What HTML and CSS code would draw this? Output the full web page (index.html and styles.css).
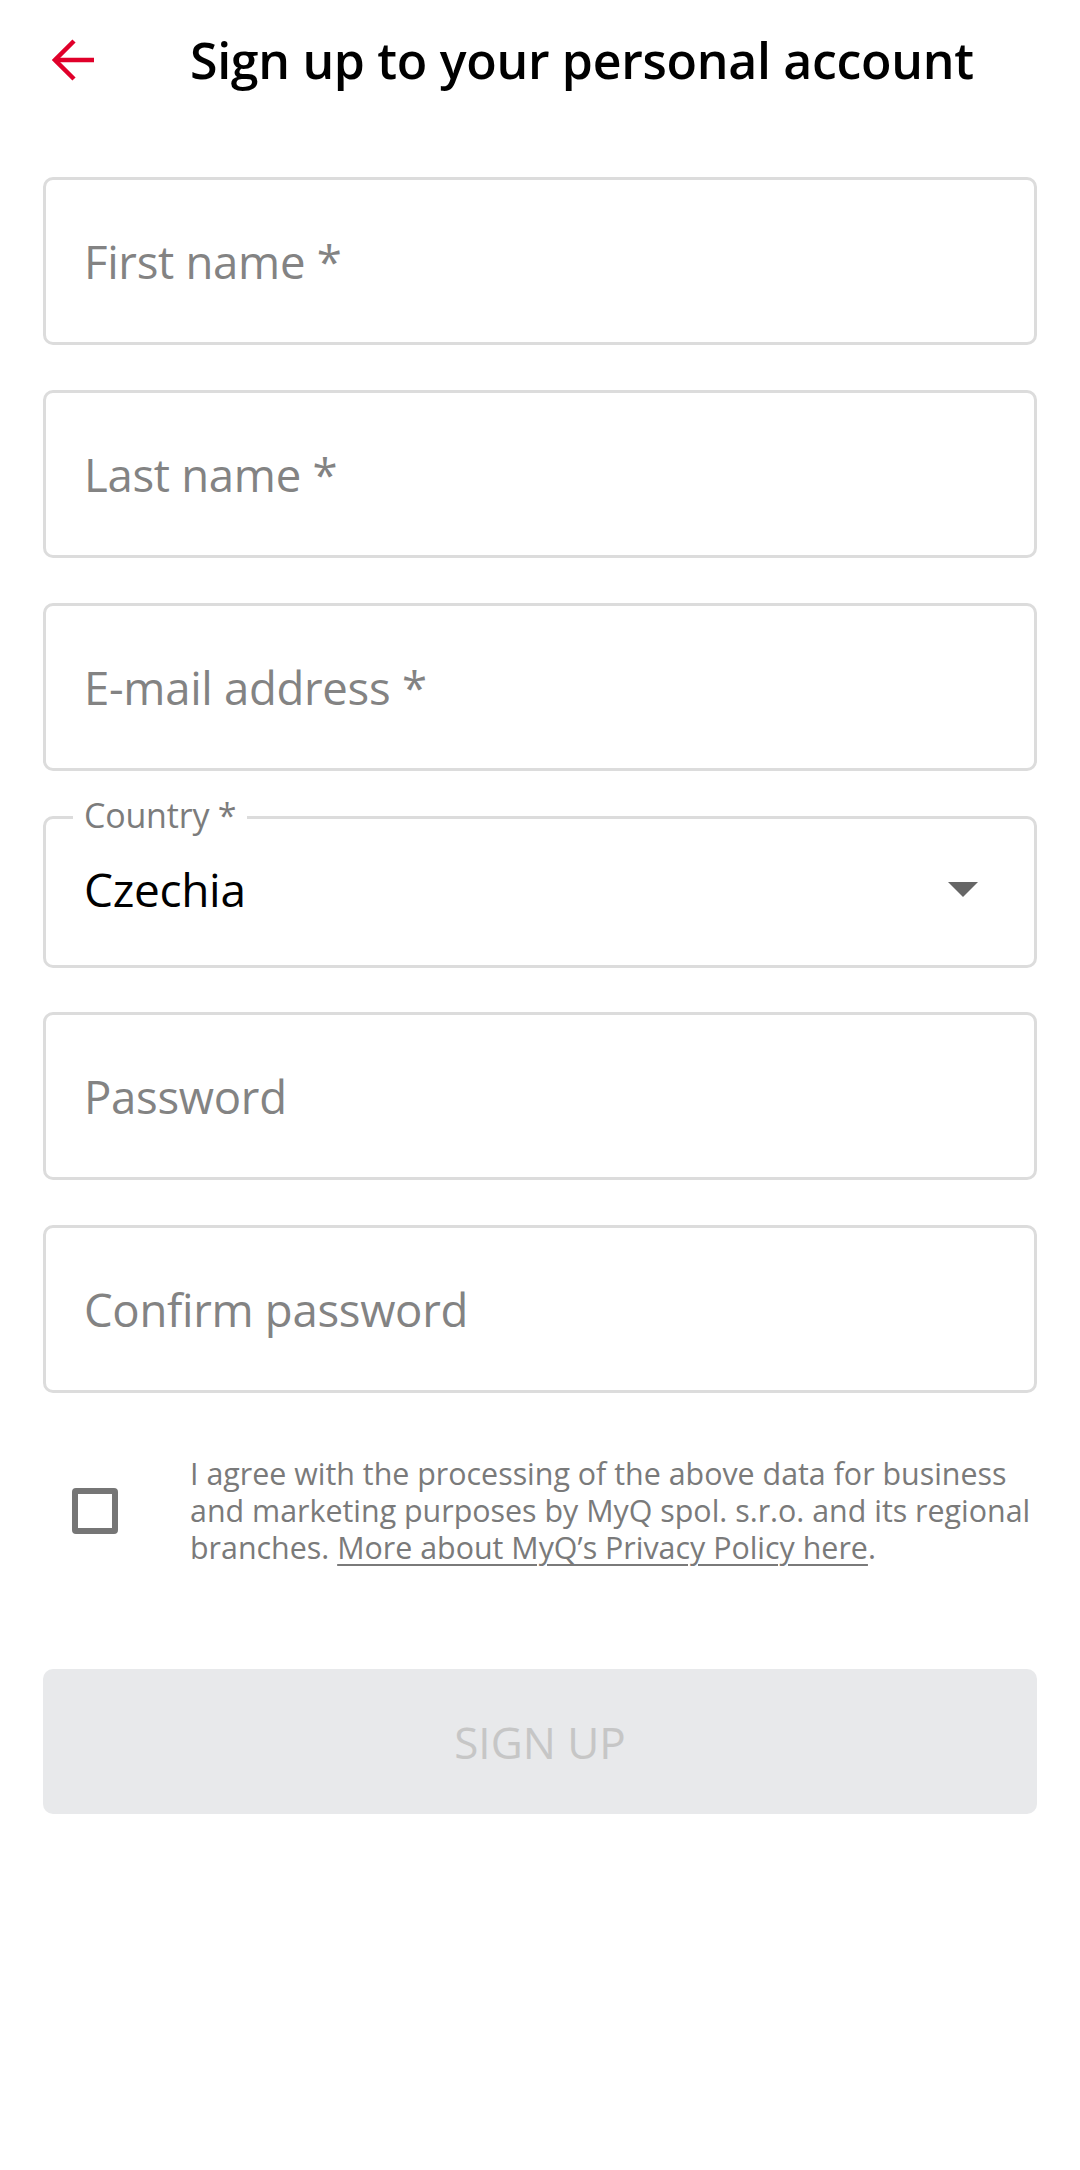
FILE: index.html
```html
<!DOCTYPE html>
<html lang="en">
<head>
<meta charset="utf-8">
<title>Sign up</title>
<link rel="stylesheet" href="styles.css">
</head>
<body>
<div class="screen">
  <header class="header">
    <button class="back" aria-label="Back">
      <svg width="44" height="42" viewBox="0 0 44 42" fill="none" stroke="#e0002a" stroke-width="4.5" stroke-linecap="butt">
        <path d="M42 21H4"/>
        <path d="M22 2L3 21L22 40"/>
      </svg>
    </button>
    <h1 class="title">Sign up to your personal account</h1>
  </header>
  <form class="form">
    <div class="field"><span class="placeholder">First name *</span></div>
    <div class="field"><span class="placeholder">Last name *</span></div>
    <div class="field"><span class="placeholder">E-mail address *</span></div>
    <div class="field field-select">
      <span class="float-label">Country *</span>
      <span class="value">Czechia</span>
      <span class="caret"></span>
    </div>
    <div class="field"><span class="placeholder">Password</span></div>
    <div class="field"><span class="placeholder">Confirm password</span></div>
    <div class="consent">
      <span class="checkbox"></span>
      <p class="consent-text">I agree with the processing of the above data for business and marketing purposes by MyQ spol. s.r.o. and its regional branches. <span class="link">More about MyQ’s Privacy Policy here</span>.</p>
    </div>
    <div class="submit">SIGN UP</div>
  </form>
</div>
</body>
</html>
```

FILE: styles.css
```css
html, body {
  margin: 0;
  padding: 0;
  background: #ffffff;
}
body {
  font-family: "Open Sans", "Noto Sans", sans-serif;
  color: #000;
}
.screen {
  width: 1080px;
  min-height: 2170px;
}
.header {
  height: 120px;
  display: flex;
  align-items: center;
  padding-left: 52px;
}
.back {
  border: 0;
  background: none;
  padding: 0;
  margin: 0;
  width: 44px;
  height: 42px;
  display: flex;
}
.title {
  margin: 0 0 0 94px;
  font-size: 50px;
  font-weight: 600;
  letter-spacing: -0.3px;
  line-height: 1;
}
.form {
  padding: 57px 43px 0;
  display: flex;
  flex-direction: column;
}
.field {
  box-sizing: border-box;
  height: 168px;
  border: 3px solid #dcdcdc;
  border-radius: 10px;
  display: flex;
  align-items: center;
  padding-left: 38px;
  margin-bottom: 45px;
}
.placeholder {
  font-size: 45.5px;
  font-weight: 500;
  color: #838383;
  letter-spacing: -0.3px;
}
.field-select {
  position: relative;
  height: 152px;
  padding-right: 56px;
  padding-bottom: 6px;
  margin-bottom: 44px;
}
.float-label {
  position: absolute;
  left: 27px;
  top: -25px;
  padding: 0 11px;
  background: #fff;
  font-size: 34px;
  line-height: 42px;
  color: #7c7c7c;
  letter-spacing: -0.2px;
}
.value {
  flex: 1;
  font-size: 46px;
  font-weight: 500;
  color: #000;
  letter-spacing: -0.3px;
}
.caret {
  width: 0;
  height: 0;
  border-left: 15px solid transparent;
  border-right: 15px solid transparent;
  border-top: 15px solid #666;
}
.consent {
  display: flex;
  align-items: center;
  margin-top: 17px;
}
.checkbox {
  box-sizing: border-box;
  flex: none;
  width: 46px;
  height: 46px;
  border: 6px solid #767676;
  border-radius: 4px;
  margin-left: 29px;
}
.consent-text {
  margin: 0 -13px 0 72px;
  font-size: 30.4px;
  line-height: 37px;
  color: #7a7a7a;
  letter-spacing: 0;
}
.link {
  text-decoration: underline;
  text-underline-offset: 5px;
  text-decoration-thickness: 2px;
}
.submit {
  margin-top: 103px;
  height: 145px;
  border-radius: 10px;
  background: #e8e9eb;
  color: #c6c6c6;
  font-size: 44px;
  font-weight: 500;
  display: flex;
  align-items: center;
  justify-content: center;
}
```
